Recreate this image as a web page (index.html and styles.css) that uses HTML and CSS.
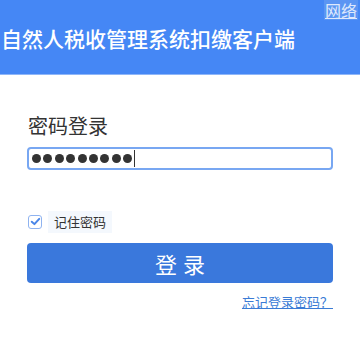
FILE: index.html
```html
<!DOCTYPE html>
<html lang="zh-CN">
<head>
<meta charset="utf-8">
<link rel="stylesheet" href="styles.css">
</head>
<body>
<div class="header">
  <a class="net">网络</a>
  <div class="title">自然人税收管理系统扣缴客户端</div>
</div>
<div class="main">
  <div class="label">密码登录</div>
  <div class="input">
    <span class="dot"></span><span class="dot"></span><span class="dot"></span><span class="dot"></span><span class="dot"></span><span class="dot"></span><span class="dot"></span><span class="dot"></span><span class="dot"></span><span class="caret"></span>
  </div>
  <div class="remember">
    <span class="box"><svg width="11" height="11" viewBox="0 0 10 10"><path d="M1.6 5.2 L4 7.4 L8.4 2.6" fill="none" stroke="#4a86e8" stroke-width="1.8" stroke-linecap="round" stroke-linejoin="round"/></svg></span>
    <span class="rtext">记住密码</span>
  </div>
  <button class="btn">登录</button>
  <div class="forgot"><a>忘记登录密码？</a></div>
</div>
</body>
</html>
```
FILE: styles.css
```css
html, body {
  margin: 0;
  padding: 0;
}
body {
  width: 360px;
  height: 360px;
  overflow: hidden;
  background: #fff;
  font-family: "Noto Sans CJK SC", "Noto Sans", sans-serif;
}
.header {
  height: 74px;
  background: #4587f5;
  border-bottom: 1px solid #8fb6f8;
  display: flex;
  flex-direction: column;
}
.net {
  align-self: flex-end;
  margin-right: 2px;
  padding: 0 1px;
  font-size: 16px;
  line-height: 20px;
  color: #dfe9fc;
  text-decoration: underline;
  background: #5b95f3;
}
.title {
  margin-top: 6px;
  padding-left: 1px;
  font-size: 21px;
  line-height: 24px;
  font-weight: 500;
  color: #fff;
  white-space: nowrap;
}
.main {
  display: flex;
  flex-direction: column;
  padding: 0 27px 0 27px;
}
.label {
  margin-top: 39px;
  font-size: 20px;
  line-height: 24px;
  color: #333;
  padding-left: 1px;
}
.input {
  margin-top: 9px;
  height: 19px;
  border: 2px solid #78a7f2;
  border-radius: 4px;
  display: flex;
  align-items: center;
  gap: 2.4px;
  padding-left: 3px;
}
.dot {
  width: 9px;
  height: 9px;
  border-radius: 50%;
  background: #333;
}
.caret {
  width: 1px;
  height: 17px;
  background: #333;
  margin-left: -1px;
}
.remember {
  margin-top: 40px;
  height: 23px;
  display: flex;
  align-items: center;
}
.box {
  width: 12px;
  height: 12px;
  border: 1.5px solid #8fb3f0;
  border-radius: 3px;
  display: flex;
  align-items: center;
  justify-content: center;
  margin-left: 1px;
}
.rtext {
  margin-left: 6px;
  padding: 0 6px;
  height: 22px;
  line-height: 22px;
  font-size: 13px;
  color: #333;
  background: #f4f8fd;
}
.btn {
  margin-top: 10px;
  height: 40px;
  width: 306px;
  border: none;
  border-radius: 4px;
  background: #3a78dc;
  color: #fff;
  font-family: inherit;
  font-size: 22px;
  letter-spacing: 6px;
  text-indent: 6px;
  padding: 0;
}
.forgot {
  margin-top: 11px;
  text-align: right;
  font-size: 13px;
  line-height: 16px;
}
.forgot a {
  color: #3a7bd5;
  text-decoration: underline;
}
```
